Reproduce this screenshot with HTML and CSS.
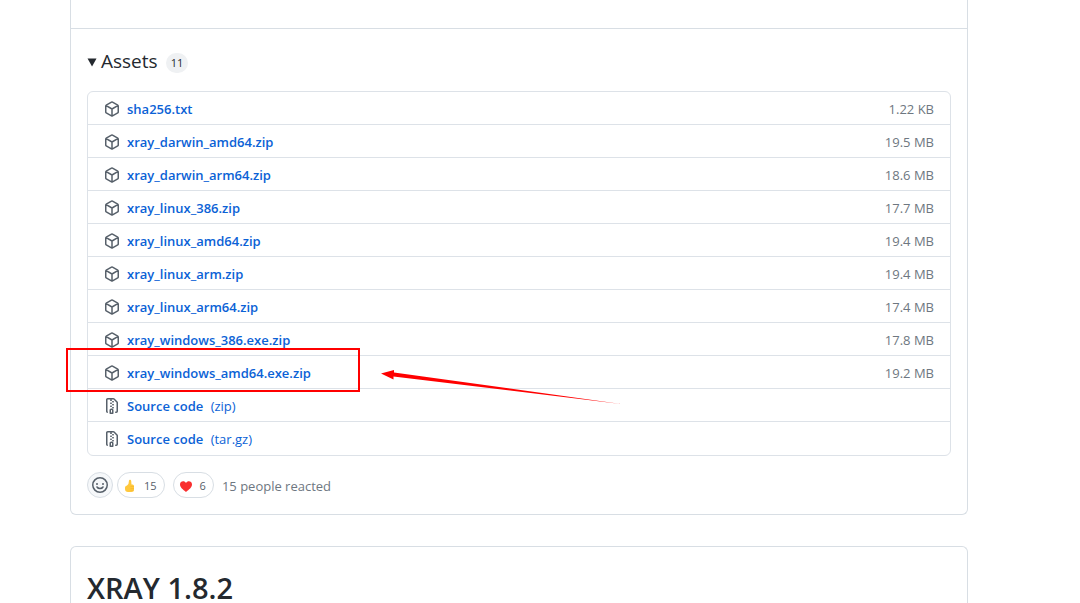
FILE: index.html
```html
<!DOCTYPE html>
<html lang="en">
<head>
    <meta charset="UTF-8">
    <meta name="viewport" content="width=device-width, initial-scale=1.0">
    <title>Releases</title>
    <link rel="stylesheet" href="styles.css">
</head>
<body>
    <svg class="sprite" aria-hidden="true">
        <symbol id="icon-package" viewBox="0 0 16 16">
            <path fill="none" stroke="#57606a" stroke-width="1.5" stroke-linejoin="round" d="M7.500 1.040a1 1 0 0 1 1 0l5.250 3.050a1 1 0 0 1 .5.860v6.100a1 1 0 0 1-.5.860L8.500 14.960a1 1 0 0 1-1 0l-5.250-3.050a1 1 0 0 1-.5-.860v-6.100a1 1 0 0 1 .5-.860ZM2.200 4.600 8 8l5.800-3.400M8 8v7"/>
        </symbol>
        <symbol id="icon-zip" viewBox="0 0 16 16">
            <path d="M3.5 1.75v11.5c0 .09.048.173.126.217a.75.75 0 0 1-.752 1.298A1.748 1.748 0 0 1 2 13.25V1.75C2 .784 2.784 0 3.75 0h5.586c.464 0 .909.185 1.237.513l2.914 2.914c.329.328.513.773.513 1.237v8.586A1.75 1.75 0 0 1 12.25 15h-.5a.75.75 0 0 1 0-1.5h.5a.25.25 0 0 0 .25-.25V4.664a.25.25 0 0 0-.073-.177L9.513 1.573a.25.25 0 0 0-.177-.073H7.25a.75.75 0 0 1 0 1.5h-.5a.75.75 0 0 1 0-1.5h-3a.25.25 0 0 0-.25.25Zm3.75 8.75h.5c.966 0 1.75.784 1.75 1.75v3a.75.75 0 0 1-.75.75h-2.5a.75.75 0 0 1-.75-.75v-3c0-.966.784-1.75 1.75-1.75ZM6 5.25a.75.75 0 0 1 .75-.75h.5a.75.75 0 0 1 0 1.5h-.5A.75.75 0 0 1 6 5.25Zm.75 2.25h.5a.75.75 0 0 1 0 1.5h-.5a.75.75 0 0 1 0-1.5ZM8 6.75A.75.75 0 0 1 8.75 6h.5a.75.75 0 0 1 0 1.5h-.5A.75.75 0 0 1 8 6.75ZM8.75 3h.5a.75.75 0 0 1 0 1.5h-.5a.75.75 0 0 1 0-1.5ZM8 9.75A.75.75 0 0 1 8.75 9h.5a.75.75 0 0 1 0 1.5h-.5A.75.75 0 0 1 8 9.75Zm-1 2.5v2.25h1v-2.25a.25.25 0 0 0-.25-.25h-.5a.25.25 0 0 0-.25.25Z"/>
        </symbol>
    </svg>

    <main class="releases">
        <section class="release">
            <div class="release-body"></div>
            <div class="release-footer">
                <details class="assets" open>
                    <summary>
                        <svg class="caret" viewBox="0 0 10 9" aria-hidden="true"><path d="M.5.5h9L5 8.500Z"/></svg>
                        <h3>Assets</h3>
                        <span class="counter">11</span>
                    </summary>
                    <ul class="asset-list">
                        <li>
                            <svg class="icon"><use href="#icon-package"/></svg>
                            <a href="#">sha256.txt</a>
                            <span class="size">1.22 KB</span>
                        </li>
                        <li>
                            <svg class="icon"><use href="#icon-package"/></svg>
                            <a href="#">xray_darwin_amd64.zip</a>
                            <span class="size">19.5 MB</span>
                        </li>
                        <li>
                            <svg class="icon"><use href="#icon-package"/></svg>
                            <a href="#">xray_darwin_arm64.zip</a>
                            <span class="size">18.6 MB</span>
                        </li>
                        <li>
                            <svg class="icon"><use href="#icon-package"/></svg>
                            <a href="#">xray_linux_386.zip</a>
                            <span class="size">17.7 MB</span>
                        </li>
                        <li>
                            <svg class="icon"><use href="#icon-package"/></svg>
                            <a href="#">xray_linux_amd64.zip</a>
                            <span class="size">19.4 MB</span>
                        </li>
                        <li>
                            <svg class="icon"><use href="#icon-package"/></svg>
                            <a href="#">xray_linux_arm.zip</a>
                            <span class="size">19.4 MB</span>
                        </li>
                        <li>
                            <svg class="icon"><use href="#icon-package"/></svg>
                            <a href="#">xray_linux_arm64.zip</a>
                            <span class="size">17.4 MB</span>
                        </li>
                        <li>
                            <svg class="icon"><use href="#icon-package"/></svg>
                            <a href="#">xray_windows_386.exe.zip</a>
                            <span class="size">17.8 MB</span>
                        </li>
                        <li class="marked">
                            <svg class="icon"><use href="#icon-package"/></svg>
                            <a href="#">xray_windows_amd64.exe.zip</a>
                            <span class="size">19.2 MB</span>
                            <span class="mark-box"></span>
                            <svg class="mark-arrow" viewBox="0 0 244 37" aria-hidden="true">
                                <path d="M0 4.500 13 1v2.500L240 35 12.500 7.500v3Z"/>
                            </svg>
                        </li>
                        <li>
                            <svg class="icon"><use href="#icon-zip"/></svg>
                            <a href="#">Source code <span class="format">(zip)</span></a>
                        </li>
                        <li>
                            <svg class="icon"><use href="#icon-zip"/></svg>
                            <a href="#">Source code <span class="format">(tar.gz)</span></a>
                        </li>
                    </ul>
                </details>
                <div class="reactions">
                    <button type="button" class="add-reaction" aria-label="Add your reaction">
                        <svg class="icon" viewBox="0 0 16 16">
                            <circle cx="8" cy="8" r="7.250" fill="none" stroke="#57606a" stroke-width="1.500"/>
                            <circle cx="5" cy="7" r="1"/>
                            <circle cx="11" cy="7" r="1"/>
                            <path fill="none" stroke="#57606a" stroke-width="1.500" stroke-linecap="round" d="M5 10c1.300 2 4.700 2 6 0"/>
                        </svg>
                    </button>
                    <button type="button" class="reaction">
                        <svg class="emoji" viewBox="0 0 12 14" aria-hidden="true">
                            <path fill="#ffc83d" d="M5 1.500C5 .5 7 .5 7.200 2L7.500 5.500H8.500Q10 5.500 10 7V10.500Q10 13 7.500 13H4Q1 13 1 10V8.500Q1 7 3 6.500Q5 5 5 1.500Z"/>
                            <path fill="none" stroke="#f5b52a" stroke-width=".6" d="M6.500 7.500h3.500M6.500 9.500h3.500M6.500 11.300h3"/>
                        </svg>
                        <span>15</span>
                    </button>
                    <button type="button" class="reaction">
                        <svg class="emoji" viewBox="0 0 12 14" aria-hidden="true">
                            <path fill="#f92f2f" d="M6 13C3 10.500 0 8.500 0 5.500 0 2 4.500 1.300 6 4 7.500 1.300 12 2 12 5.500 12 8.500 9 10.500 6 13Z"/>
                        </svg>
                        <span>6</span>
                    </button>
                    <span class="reacted">15 people reacted</span>
                </div>
            </div>
        </section>

        <section class="release next-release">
            <h2>XRAY 1.8.2</h2>
        </section>
    </main>
</body>
</html>
```
FILE: styles.css
```css
* {
    box-sizing: border-box;
}

body {
    margin: 0;
    background-color: #fff;
    color: #24292f;
    font-family: "Segoe UI", "Open Sans", "Noto Sans", sans-serif;
    font-size: 13px;
    line-height: 20px;
}

.sprite {
    display: none;
}

.releases {
    margin: 0 112px 0 70px;
}

.release {
    border: 1px solid #d8dee4;
    border-radius: 6px;
}

.release:first-child {
    border-top: none;
    border-top-left-radius: 0;
    border-top-right-radius: 0;
}

.release-body {
    height: 28px;
}

.release-footer {
    padding: 16px;
    border-top: 1px solid #d8dee4;
}

summary {
    display: flex;
    align-items: center;
    height: 32px;
    margin-bottom: 14px;
    list-style: none;
    cursor: pointer;
}

.caret {
    width: 10px;
    height: 9px;
    margin: 2px 4px 0 0;
    fill: #24292f;
}

h3 {
    margin: 0;
    font-size: 19px;
    font-weight: 500;
    line-height: 24px;
}

.counter {
    min-width: 22px;
    margin: 4px 0 0 8px;
    padding: 0 5px;
    border-radius: 10px;
    background-color: #eff1f3;
    font-size: 11px;
    text-align: center;
}

.asset-list {
    margin: 0;
    padding: 0;
    border: 1px solid #dde2e8;
    border-radius: 6px;
    list-style: none;
}

.asset-list li {
    display: flex;
    align-items: center;
    height: 33px;
    padding: 1px 16px 0;
    border-bottom: 1px solid #dde2e8;
}

.asset-list li:last-child {
    border-bottom: none;
}

.icon {
    flex: none;
    width: 16px;
    height: 16px;
    fill: #57606a;
}

.asset-list a {
    margin-left: 7px;
    color: #0b62d6;
    font-weight: 600;
    text-decoration: none;
}

.asset-list .format {
    margin-left: 4px;
    font-weight: 400;
}

.size {
    margin-left: auto;
    color: #6e7781;
}

.marked {
    position: relative;
}

.mark-box {
    position: absolute;
    top: -8px;
    left: -22px;
    width: 294px;
    height: 44px;
    border: 2px solid #f00;
}

.mark-arrow {
    position: absolute;
    top: 13px;
    left: 293px;
    width: 244px;
    height: 37px;
    fill: #f00;
}

.reactions {
    display: flex;
    align-items: center;
    margin-top: 16px;
}

.reactions button {
    display: flex;
    align-items: center;
    justify-content: center;
    height: 26px;
    padding: 0;
    border: 1px solid #d8dee4;
    border-radius: 13px;
    background-color: #fff;
    color: #57606a;
    font: inherit;
    font-size: 11px;
    cursor: pointer;
}

.reactions .add-reaction {
    width: 26px;
    margin-right: 4px;
    background-color: #f6f8fa;
}

.reactions .reaction {
    gap: 8px;
    margin-right: 8px;
    padding: 2px 7px 0 6px;
}

.emoji {
    width: 12px;
    height: 14px;
}

.reacted {
    padding-top: 2px;
    color: #6e7781;
}

.next-release {
    margin-top: 31px;
    padding: 26px 16px 0;
    border-bottom: none;
    border-bottom-left-radius: 0;
    border-bottom-right-radius: 0;
}

h2 {
    margin: 0;
    font-size: 29px;
    font-weight: 600;
    line-height: 30px;
}
```
